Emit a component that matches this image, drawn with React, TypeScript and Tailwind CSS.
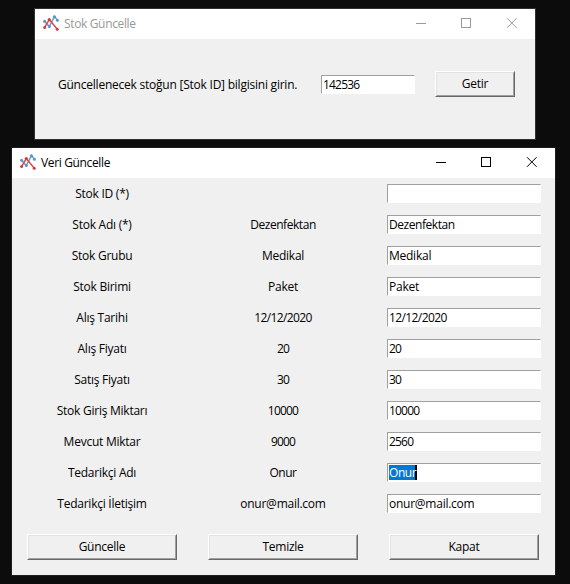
import type { ReactNode } from "react";

const TEXT = "font-['Open_Sans','Noto_Sans',sans-serif] text-[12px] leading-[17px] whitespace-nowrap";

const NORMAL = "tracking-[-0.25px]";
const TIGHT = "tracking-[-0.45px]";
const DATE = "tracking-[-0.6px]";
const DIGITS = "tracking-[-0.8px]";

function AppIcon() {
  return (
    <svg className="h-4 w-4 shrink-0" viewBox="0 0 16 16" fill="none" strokeWidth="1.5">
      <path d="M1.5 6.3 6.3 11.6 11.5 1.6 14.6 5.3" stroke="#6ba0c8" />
      <g fill="#5a97c4">
        <circle cx="1.6" cy="6.3" r="1.5" />
        <circle cx="6.3" cy="11.4" r="1.5" />
        <circle cx="11.4" cy="1.8" r="1.6" />
        <circle cx="14.4" cy="5.3" r="1.5" />
      </g>
      <path d="M1.5 12.6 6.3 4.5 14.3 14.2" stroke="#d84a4d" />
      <g fill="#d8393f">
        <circle cx="1.6" cy="12.5" r="1.5" />
        <circle cx="6.3" cy="4.6" r="1.6" />
        <circle cx="14.2" cy="14.2" r="1.5" />
      </g>
    </svg>
  );
}

function TitleBar({ title, color }: { title: string; color: string }) {
  return (
    <div className={`flex h-[30px] shrink-0 items-start bg-white pl-2 ${color}`}>
      <div className="flex pt-[6px]">
        <AppIcon />
        <span className={`ml-[5px] tracking-[-0.35px] ${TEXT}`}>{title}</span>
      </div>
      <svg className="mt-[9px] mr-[18px] ml-auto h-[10px] w-[101px]" viewBox="0 0 101 10" fill="none" stroke="currentColor">
        <path d="M0 5.5H10" />
        <rect x="45.5" y="0.5" width="9" height="9" />
        <path d="M91 0.2 100.6 9.8M100.6 0.2 91 9.8" />
      </svg>
    </div>
  );
}

function Button({ children, width }: { children: ReactNode; width: string }) {
  return (
    <button
      className={`block h-[26px] border border-t-white border-l-white border-r-[#696969] border-b-[#696969] text-black ${width}`}
    >
      <span
        className={`flex h-full items-center justify-center border border-t-[#e3e3e3] border-l-[#e3e3e3] border-r-[#a0a0a0] border-b-[#a0a0a0] pb-px ${NORMAL} ${TEXT}`}
      >
        {children}
      </span>
    </button>
  );
}

type EntryProps = { value: string; width: string; tracking?: string; selected?: boolean };

function Entry({ value, width, tracking = NORMAL, selected }: EntryProps) {
  return (
    <div
      className={`flex h-[19px] items-center border border-t-[#a0a0a0] border-r-white border-b-white border-l-[#a0a0a0] bg-white pl-px text-black ${tracking} ${width} ${TEXT}`}
    >
      {selected ? (
        <span className="h-[15px] w-7 border-r-2 border-black bg-[#0078d7] leading-[15px] text-white">{value}</span>
      ) : (
        value
      )}
    </div>
  );
}

const rows = [
  { label: "Stok ID (*)", current: "", value: "" },
  { label: "Stok Adı (*)", current: "Dezenfektan", value: "Dezenfektan", tracking: TIGHT },
  { label: "Stok Grubu", current: "Medikal", value: "Medikal" },
  { label: "Stok Birimi", current: "Paket", value: "Paket" },
  { label: "Alış Tarihi", current: "12/12/2020", value: "12/12/2020", tracking: DATE },
  { label: "Alış Fiyatı", current: "20", value: "20", tracking: DIGITS },
  { label: "Satış Fiyatı", current: "30", value: "30", tracking: DIGITS },
  { label: "Stok Giriş Miktarı", current: "10000", value: "10000", tracking: DIGITS },
  { label: "Mevcut Miktar", current: "9000", value: "2560", tracking: DIGITS },
  { label: "Tedarikçi Adı", current: "Onur", value: "Onur", tracking: TIGHT, selected: true },
  { label: "Tedarikçi İletişim", current: "onur@mail.com", value: "onur@mail.com" },
];

export default function App() {
  return (
    <div className="flex h-[584px] w-[570px] flex-col items-start overflow-hidden bg-[#0c0c0c] pt-2 text-black">
      <div className="ml-[34px] flex h-[132px] w-[502px] flex-col border border-[#303232] bg-[#f0f0f0]">
        <TitleBar title="Stok Güncelle" color="text-[#999999]" />
        <div className="flex pt-8">
          <span className={`mt-[5px] ml-[23px] w-[263px] tracking-[-0.23px] ${TEXT}`}>
            Güncellenecek stoğun [Stok ID] bilgisini girin.
          </span>
          <div className="mt-1 mr-5">
            <Entry value="142536" width="w-[94px]" tracking={DIGITS} />
          </div>
          <Button width="w-[80px]">Getir</Button>
        </div>
      </div>

      <div className="mt-[7px] ml-[11px] flex h-[429px] w-[545px] flex-col border border-[#1c1c1c] bg-[#f0f0f0]">
        <TitleBar title="Veri Güncelle" color="text-black" />
        <div>
          {rows.map((row) => (
            <div key={row.label} className="grid h-[31px] grid-cols-3 items-center">
              <span className={`pr-px text-center tracking-[-0.25px] ${TEXT}`}>{row.label}</span>
              <span className={`pr-px text-center ${row.tracking ?? NORMAL} ${TEXT}`}>{row.current}</span>
              <div className="pl-[13px]">
                <Entry value={row.value} width="w-[154px]" tracking={row.tracking} selected={row.selected} />
              </div>
            </div>
          ))}
        </div>
        <div className="grid grid-cols-3 pt-[15px]">
          {["Güncelle", "Temizle", "Kapat"].map((name) => (
            <div key={name} className="pl-[15px]">
              <Button width="w-[150px]">{name}</Button>
            </div>
          ))}
        </div>
      </div>
    </div>
  );
}
